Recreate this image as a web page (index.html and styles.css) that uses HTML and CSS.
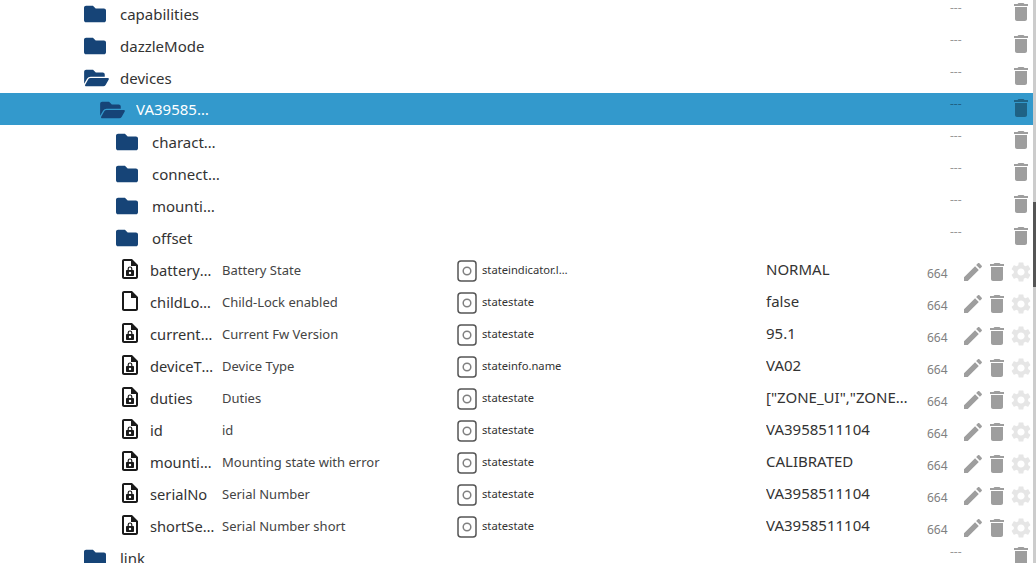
FILE: index.html
```html
<!DOCTYPE html>
<html lang="en">
<head>
    <meta charset="UTF-8">
    <title>Objects</title>
    <link rel="stylesheet" href="styles.css">
</head>
<body>

    <!-- icons -->
    <svg class="icon-defs" aria-hidden="true">
        <symbol id="i-folder" viewBox="0 0 512 512"><path d="M464 128H272l-64-64H48C21.49 64 0 85.49 0 112v288c0 26.51 21.49 48 48 48h416c26.51 0 48-21.49 48-48V176c0-26.51-21.49-48-48-48z"/></symbol>
        <symbol id="i-folder-open" viewBox="0 0 576 512"><path d="M572.694 292.093L500.27 416.248A63.997 63.997 0 0 1 444.989 448H45.025c-18.523 0-30.064-20.093-20.731-36.093l72.424-124.155A64 64 0 0 1 152 256h399.964c18.523 0 30.064 20.093 20.73 36.093zM152 224h328v-48c0-26.51-21.49-48-48-48H272l-64-64H48C21.49 64 0 85.49 0 112v278.046l69.077-118.418C86.214 242.25 117.989 224 152 224z"/></symbol>
        <symbol id="i-file" viewBox="0 0 24 24"><path d="M14 2H6c-1.100 0-1.990.9-1.990 2L4 20c0 1.100.89 2 1.990 2H18c1.100 0 2-.9 2-2V8l-6-6zM6 20V4h7v5h5v11H6z"/></symbol>
        <symbol id="i-file-lock" viewBox="0 0 24 24"><path d="M14 2H6c-1.100 0-1.990.9-1.990 2L4 20c0 1.100.89 2 1.990 2H18c1.100 0 2-.9 2-2V8l-6-6zM6 20V4h7v5h5v11H6z"/><path d="M15 13h-.6v-1.200a2.400 2.400 0 0 0-4.800 0V13H9c-.55 0-1 .45-1 1v4c0 .55.45 1 1 1h6c.55 0 1-.45 1-1v-4c0-.55-.45-1-1-1zm-4.200-1.200a1.200 1.200 0 0 1 2.400 0V13h-2.400v-1.200zM12 17.200a1.200 1.200 0 1 1 0-2.400 1.200 1.200 0 0 1 0 2.400z"/></symbol>
        <symbol id="i-role" viewBox="0 0 20 22"><rect x="1" y="1" width="18" height="20" rx="3" fill="none" stroke="currentColor" stroke-width="1.500"/><circle cx="10" cy="11" r="3.800" fill="none" stroke="#808080" stroke-width="1.500"/></symbol>
        <symbol id="i-edit" viewBox="0 0 24 24"><path d="M3 17.250V21h3.750L17.810 9.940l-3.750-3.750L3 17.250zM20.710 7.040c.39-.39.39-1.020 0-1.410l-2.340-2.340c-.39-.39-1.020-.39-1.410 0l-1.830 1.830 3.750 3.750 1.830-1.830z"/></symbol>
        <symbol id="i-trash" viewBox="0 0 24 24"><path d="M6 19c0 1.100.9 2 2 2h8c1.100 0 2-.9 2-2V7H6v12zM19 4h-3.500l-1-1h-5l-1 1H5v2h14V4z"/></symbol>
        <symbol id="i-gear" viewBox="0 0 24 24"><path d="M19.140 12.940c.04-.3.060-.61.060-.94 0-.32-.02-.64-.07-.94l2.030-1.580c.18-.14.23-.41.120-.61l-1.920-3.320c-.12-.22-.37-.29-.59-.22l-2.390.96c-.5-.38-1.030-.7-1.620-.94l-.36-2.540c-.04-.24-.24-.41-.48-.41h-3.840c-.24 0-.43.17-.47.41l-.36 2.540c-.59.24-1.130.57-1.620.94l-2.390-.96c-.22-.08-.47 0-.59.22L2.740 8.870c-.12.21-.08.47.12.61l2.030 1.580c-.05.3-.09.63-.09.94s.02.64.07.94l-2.030 1.580c-.18.14-.23.41-.12.61l1.920 3.320c.12.22.37.29.59.22l2.390-.96c.5.38 1.030.7 1.620.94l.36 2.540c.05.24.24.41.48.41h3.840c.24 0 .44-.17.47-.41l.36-2.540c.59-.24 1.130-.56 1.620-.94l2.390.96c.22.08.47 0 .59-.22l1.920-3.320c.12-.22.07-.47-.12-.61l-2.010-1.580zM12 15.600c-1.980 0-3.600-1.620-3.600-3.600s1.620-3.600 3.600-3.600 3.600 1.620 3.600 3.600-1.620 3.600-3.600 3.600z"/></symbol>
    </svg>

    <div class="page">
        <div class="tree">

            <!-- folders -->
            <div class="row folder level-0">
                <svg class="folder-icon"><use href="#i-folder"/></svg>
                <span class="folder-name">capabilities</span>
                <span class="acl-none">---</span>
                <svg class="action trash"><use href="#i-trash"/></svg>
            </div>
            <div class="row folder level-0">
                <svg class="folder-icon"><use href="#i-folder"/></svg>
                <span class="folder-name">dazzleMode</span>
                <span class="acl-none">---</span>
                <svg class="action trash"><use href="#i-trash"/></svg>
            </div>
            <div class="row folder level-0">
                <svg class="folder-icon open"><use href="#i-folder-open"/></svg>
                <span class="folder-name">devices</span>
                <span class="acl-none">---</span>
                <svg class="action trash"><use href="#i-trash"/></svg>
            </div>
            <div class="row folder level-1 selected">
                <svg class="folder-icon open"><use href="#i-folder-open"/></svg>
                <span class="folder-name">VA3958511104</span>
                <span class="acl-none">---</span>
                <svg class="action trash"><use href="#i-trash"/></svg>
            </div>
            <div class="row folder level-2">
                <svg class="folder-icon"><use href="#i-folder"/></svg>
                <span class="folder-name">characteristics</span>
                <span class="acl-none">---</span>
                <svg class="action trash"><use href="#i-trash"/></svg>
            </div>
            <div class="row folder level-2">
                <svg class="folder-icon"><use href="#i-folder"/></svg>
                <span class="folder-name">connectionState</span>
                <span class="acl-none">---</span>
                <svg class="action trash"><use href="#i-trash"/></svg>
            </div>
            <div class="row folder level-2">
                <svg class="folder-icon"><use href="#i-folder"/></svg>
                <span class="folder-name">mountingState</span>
                <span class="acl-none">---</span>
                <svg class="action trash"><use href="#i-trash"/></svg>
            </div>
            <div class="row folder level-2">
                <svg class="folder-icon"><use href="#i-folder"/></svg>
                <span class="folder-name">offset</span>
                <span class="acl-none">---</span>
                <svg class="action trash"><use href="#i-trash"/></svg>
            </div>

            <!-- states -->
            <div class="row state">
                <div class="name-cell"><svg class="file-icon"><use href="#i-file-lock"/></svg><span class="state-name">batteryState</span></div>
                <span class="state-title">Battery State</span>
                <div class="role-cell"><svg class="role-icon"><use href="#i-role"/></svg><span class="role-text">stateindicator.lowbat</span></div>
                <span class="state-value">NORMAL</span>
                <span class="acl">664</span>
                <svg class="action"><use href="#i-edit"/></svg>
                <svg class="action"><use href="#i-trash"/></svg>
                <svg class="action gear"><use href="#i-gear"/></svg>
            </div>
            <div class="row state">
                <div class="name-cell"><svg class="file-icon"><use href="#i-file"/></svg><span class="state-name">childLockEnabled</span></div>
                <span class="state-title">Child-Lock enabled</span>
                <div class="role-cell"><svg class="role-icon"><use href="#i-role"/></svg><span class="role-text">statestate</span></div>
                <span class="state-value">false</span>
                <span class="acl">664</span>
                <svg class="action"><use href="#i-edit"/></svg>
                <svg class="action"><use href="#i-trash"/></svg>
                <svg class="action gear"><use href="#i-gear"/></svg>
            </div>
            <div class="row state">
                <div class="name-cell"><svg class="file-icon"><use href="#i-file-lock"/></svg><span class="state-name">currentFwVersion</span></div>
                <span class="state-title">Current Fw Version</span>
                <div class="role-cell"><svg class="role-icon"><use href="#i-role"/></svg><span class="role-text">statestate</span></div>
                <span class="state-value">95.1</span>
                <span class="acl">664</span>
                <svg class="action"><use href="#i-edit"/></svg>
                <svg class="action"><use href="#i-trash"/></svg>
                <svg class="action gear"><use href="#i-gear"/></svg>
            </div>
            <div class="row state">
                <div class="name-cell"><svg class="file-icon"><use href="#i-file-lock"/></svg><span class="state-name">deviceType</span></div>
                <span class="state-title">Device Type</span>
                <div class="role-cell"><svg class="role-icon"><use href="#i-role"/></svg><span class="role-text">stateinfo.name</span></div>
                <span class="state-value">VA02</span>
                <span class="acl">664</span>
                <svg class="action"><use href="#i-edit"/></svg>
                <svg class="action"><use href="#i-trash"/></svg>
                <svg class="action gear"><use href="#i-gear"/></svg>
            </div>
            <div class="row state">
                <div class="name-cell"><svg class="file-icon"><use href="#i-file-lock"/></svg><span class="state-name">duties</span></div>
                <span class="state-title">Duties</span>
                <div class="role-cell"><svg class="role-icon"><use href="#i-role"/></svg><span class="role-text">statestate</span></div>
                <span class="state-value">["ZONE_UI","ZONE_CONTROL"]</span>
                <span class="acl">664</span>
                <svg class="action"><use href="#i-edit"/></svg>
                <svg class="action"><use href="#i-trash"/></svg>
                <svg class="action gear"><use href="#i-gear"/></svg>
            </div>
            <div class="row state">
                <div class="name-cell"><svg class="file-icon"><use href="#i-file-lock"/></svg><span class="state-name">id</span></div>
                <span class="state-title">id</span>
                <div class="role-cell"><svg class="role-icon"><use href="#i-role"/></svg><span class="role-text">statestate</span></div>
                <span class="state-value">VA3958511104</span>
                <span class="acl">664</span>
                <svg class="action"><use href="#i-edit"/></svg>
                <svg class="action"><use href="#i-trash"/></svg>
                <svg class="action gear"><use href="#i-gear"/></svg>
            </div>
            <div class="row state">
                <div class="name-cell"><svg class="file-icon"><use href="#i-file-lock"/></svg><span class="state-name">mountingState</span></div>
                <span class="state-title">Mounting state with error</span>
                <div class="role-cell"><svg class="role-icon"><use href="#i-role"/></svg><span class="role-text">statestate</span></div>
                <span class="state-value">CALIBRATED</span>
                <span class="acl">664</span>
                <svg class="action"><use href="#i-edit"/></svg>
                <svg class="action"><use href="#i-trash"/></svg>
                <svg class="action gear"><use href="#i-gear"/></svg>
            </div>
            <div class="row state">
                <div class="name-cell"><svg class="file-icon"><use href="#i-file-lock"/></svg><span class="state-name">serialNo</span></div>
                <span class="state-title">Serial Number</span>
                <div class="role-cell"><svg class="role-icon"><use href="#i-role"/></svg><span class="role-text">statestate</span></div>
                <span class="state-value">VA3958511104</span>
                <span class="acl">664</span>
                <svg class="action"><use href="#i-edit"/></svg>
                <svg class="action"><use href="#i-trash"/></svg>
                <svg class="action gear"><use href="#i-gear"/></svg>
            </div>
            <div class="row state">
                <div class="name-cell"><svg class="file-icon"><use href="#i-file-lock"/></svg><span class="state-name">shortSerialNo</span></div>
                <span class="state-title">Serial Number short</span>
                <div class="role-cell"><svg class="role-icon"><use href="#i-role"/></svg><span class="role-text">statestate</span></div>
                <span class="state-value">VA3958511104</span>
                <span class="acl">664</span>
                <svg class="action"><use href="#i-edit"/></svg>
                <svg class="action"><use href="#i-trash"/></svg>
                <svg class="action gear"><use href="#i-gear"/></svg>
            </div>

            <div class="row folder level-0">
                <svg class="folder-icon"><use href="#i-folder"/></svg>
                <span class="folder-name">link</span>
                <span class="acl-none">---</span>
                <svg class="action trash"><use href="#i-trash"/></svg>
            </div>
        </div>

        <div class="scrollbar"><div class="scrollbar-thumb"></div></div>
    </div>

</body>
</html>
```

FILE: styles.css
```css
/* Reset & Global Styles */
* {
    margin: 0;
    padding: 0;
    box-sizing: border-box;
    font-family: 'Noto Sans', sans-serif;
}

body {
    background: #ffffff;
    color: #333333;
    height: 563px;
    overflow: hidden;
}

.icon-defs {
    display: none;
}

.page {
    display: flex;
    height: 563px;
    overflow: hidden;
}

/* Tree */
.tree {
    flex: 1;
    margin-top: -3px;
}

.row {
    height: 32px;
    align-items: center;
}

.action {
    width: 24px;
    height: 24px;
    fill: #9e9e9e;
}

/* Folder rows */
.folder {
    display: flex;
}

.level-0 { padding-left: 84px; }
.level-1 { padding-left: 100px; }
.level-2 { padding-left: 116px; }

.folder-icon {
    width: 22px;
    height: 22px;
    margin-top: 1px;
    margin-right: 14px;
    fill: #164477;
    flex-shrink: 0;
}

.folder-icon.open {
    width: 25px;
    margin-right: 11px;
}

.folder-name {
    font-size: 15px;
    margin-top: 2px;
    width: 74px;
    white-space: nowrap;
    overflow: hidden;
    text-overflow: ellipsis;
    flex-shrink: 0;
}

.level-0 .folder-name {
    width: 120px;
}

.level-2 .folder-name {
    width: 68px;
}

.acl-none {
    margin-left: auto;
    width: 59px;
    font-size: 12px;
    color: #999999;
    align-self: flex-start;
    line-height: 22px;
}

.trash {
    align-self: flex-start;
    margin-top: 3px;
}

/* Selected row */
.selected {
    background: #3399cc;
    color: #ffffff;
}

.selected .folder-name {
    margin-top: 0;
}

.selected .acl-none {
    color: #1f6285;
}

.selected .trash {
    fill: #1f6285;
}

/* State rows */
.state {
    display: grid;
    grid-template-columns: 222px 235px 309px 161px 34px 24px 24px 24px;
}

.name-cell {
    display: flex;
    align-items: center;
    padding-left: 118px;
}

.file-icon {
    width: 24px;
    height: 24px;
    fill: #1a1a1a;
    flex-shrink: 0;
}

.state-name {
    margin-left: 8px;
    margin-top: 2px;
    width: 64.500px;
    font-size: 14.700px;
    white-space: nowrap;
    overflow: hidden;
    text-overflow: ellipsis;
}

.state-title {
    font-size: 13px;
    margin-top: 2px;
    color: #444444;
    white-space: nowrap;
}

.role-cell {
    display: flex;
    align-items: center;
}

.role-icon {
    width: 20px;
    height: 22px;
    color: #555555;
    flex-shrink: 0;
    margin-top: 3px;
}

.role-text {
    margin-left: 5px;
    width: 87px;
    font-size: 11.200px;
    white-space: nowrap;
    overflow: hidden;
    text-overflow: ellipsis;
}

.state-value {
    font-size: 15px;
    white-space: nowrap;
    overflow: hidden;
    text-overflow: ellipsis;
    padding-right: 17px;
}

.acl {
    font-size: 12px;
    color: #808080;
    margin-top: 8px;
}

.state .action {
    margin-top: 6px;
}

.state .gear {
    fill: #e6e6e6;
}

/* Scrollbar */
.scrollbar {
    width: 3px;
    background: #cccccc;
}

.scrollbar-thumb {
    margin-top: 202px;
    height: 85px;
    background: #555555;
}
```
